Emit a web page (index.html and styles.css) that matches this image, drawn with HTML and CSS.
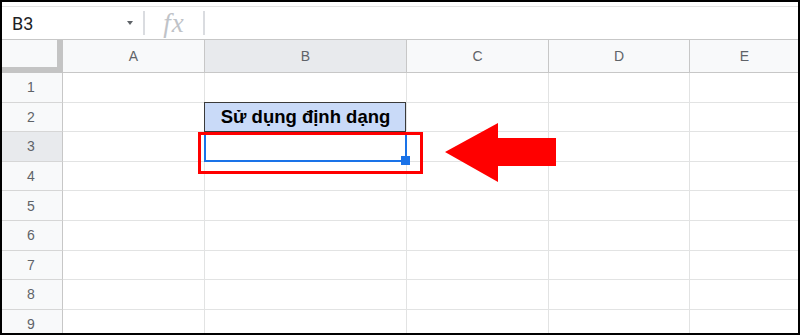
FILE: index.html
```
<!DOCTYPE html>
<html>
<head>
    <title>Sheet</title>
    <link rel="stylesheet" href="styles.css">
</head>
<body>
    <div class="frame">
        <div class="topgap"></div>
        <div class="formula">
            <div class="namebox"><span class="ref">B3</span><span class="caret"></span></div>
            <div class="sep"></div>
            <div class="fx">fx</div>
            <div class="sep"></div>
            <div class="input"></div>
        </div>

        <div class="sheet">
            <div class="corner"></div>
            <div class="colhead">A</div>
            <div class="colhead sel">B</div>
            <div class="colhead">C</div>
            <div class="colhead">D</div>
            <div class="colhead">E</div>

            <div class="rowhead">1</div>
            <div class="cell"></div><div class="cell"></div><div class="cell"></div><div class="cell"></div><div class="cell"></div>

            <div class="rowhead">2</div>
            <div class="cell"></div><div class="cell title">Sử dụng định dạng</div><div class="cell"></div><div class="cell"></div><div class="cell"></div>

            <div class="rowhead sel">3</div>
            <div class="cell"></div><div class="cell active"></div><div class="cell"></div><div class="cell"></div><div class="cell"></div>

            <div class="rowhead">4</div>
            <div class="cell"></div><div class="cell"></div><div class="cell"></div><div class="cell"></div><div class="cell"></div>

            <div class="rowhead">5</div>
            <div class="cell"></div><div class="cell"></div><div class="cell"></div><div class="cell"></div><div class="cell"></div>

            <div class="rowhead">6</div>
            <div class="cell"></div><div class="cell"></div><div class="cell"></div><div class="cell"></div><div class="cell"></div>

            <div class="rowhead">7</div>
            <div class="cell"></div><div class="cell"></div><div class="cell"></div><div class="cell"></div><div class="cell"></div>

            <div class="rowhead">8</div>
            <div class="cell"></div><div class="cell"></div><div class="cell"></div><div class="cell"></div><div class="cell"></div>

            <div class="rowhead">9</div>
            <div class="cell"></div><div class="cell"></div><div class="cell"></div><div class="cell"></div><div class="cell"></div>
        </div>

        <!-- annotation -->
        <div class="callout"></div>
        <svg class="arrow" width="120" height="68" viewBox="440 118 120 68">
            <polygon points="445,152 498,123 498,138 556,138 556,166 498,166 498,182" fill="#ff0000"/>
        </svg>
    </div>
</body>
</html>
```

FILE: styles.css
```
body {
    margin: 0;
    font-family: "Liberation Sans", Arial, sans-serif;
}
.frame {
    position: relative;
    width: 800px;
    height: 335px;
    overflow: hidden;
    background: #fff;
}
.frame::after {
    content: "";
    position: absolute;
    inset: 0;
    border: 2px solid #000;
    z-index: 10;
}
.topgap {
    height: 6px;
    border-bottom: 1px solid #e3e3e3;
}
.formula {
    display: flex;
    align-items: center;
    height: 32px;
    border-bottom: 1px solid #c7c7c7;
}
.namebox {
    box-sizing: border-box;
    width: 143px;
    padding: 0 10px 0 12px;
    display: flex;
    align-items: center;
    justify-content: space-between;
}
.ref {
    font-family: Roboto, Arial, sans-serif;
    font-size: 18px;
    color: #202124;
}
.caret {
    width: 0;
    height: 0;
    border-left: 3px solid transparent;
    border-right: 3px solid transparent;
    border-top: 4px solid #5f6368;
}
.sep {
    width: 2px;
    height: 24px;
    background: #dadce0;
}
.fx {
    width: 58px;
    text-align: center;
    font-family: "Liberation Serif", serif;
    font-style: italic;
    font-size: 27px;
    letter-spacing: 1px;
    color: #bfc3c8;
    line-height: 32px;
}
.sheet {
    display: grid;
    grid-template-columns: 63px 142px 202px 142px 141px 1fr;
    grid-template-rows: 33px repeat(9, 29.6px);
}
.sheet > div {
    box-sizing: border-box;
}
.corner {
    background: #f8f9fa;
    border-right: 6px solid #c4c4c4;
    border-bottom: 6px solid #c4c4c4;
}
.colhead {
    background: #f8f9fa;
    border-right: 1px solid #c7c7c7;
    border-bottom: 1px solid #c7c7c7;
    color: #5f6368;
    font-size: 14px;
    display: flex;
    align-items: center;
    justify-content: center;
}
.rowhead {
    background: #f8f9fa;
    border-right: 1px solid #c7c7c7;
    border-bottom: 1px solid #d6d6d6;
    color: #5f6368;
    font-size: 14px;
    display: flex;
    align-items: center;
    justify-content: center;
}
.sel {
    background: #e8eaed;
}
.cell {
    border-right: 1px solid #e2e3e3;
    border-bottom: 1px solid #e2e3e3;
}
.title {
    position: relative;
    background: #c9daf8;
    font-weight: bold;
    font-size: 18.5px;
    color: #000;
    display: flex;
    align-items: center;
    justify-content: center;
}
.title::after {
    content: "";
    position: absolute;
    inset: -1px 0 -1px -1px;
    border: 1px solid #3a3a3a;
    z-index: 2;
}
.active {
    position: relative;
}
.active::before {
    content: "";
    position: absolute;
    inset: 0 -1px -1px -1px;
    border: 2px solid #1a73e8;
    border-top: none;
}
.active::after {
    content: "";
    position: absolute;
    right: -4px;
    bottom: -4px;
    width: 9px;
    height: 9px;
    background: #1a73e8;
    z-index: 3;
}
.callout {
    position: absolute;
    left: 198px;
    top: 132px;
    width: 225px;
    height: 42px;
    box-sizing: border-box;
    border: 3px solid #ff0000;
    z-index: 4;
}
.arrow {
    position: absolute;
    left: 440px;
    top: 118px;
    z-index: 4;
}
```
